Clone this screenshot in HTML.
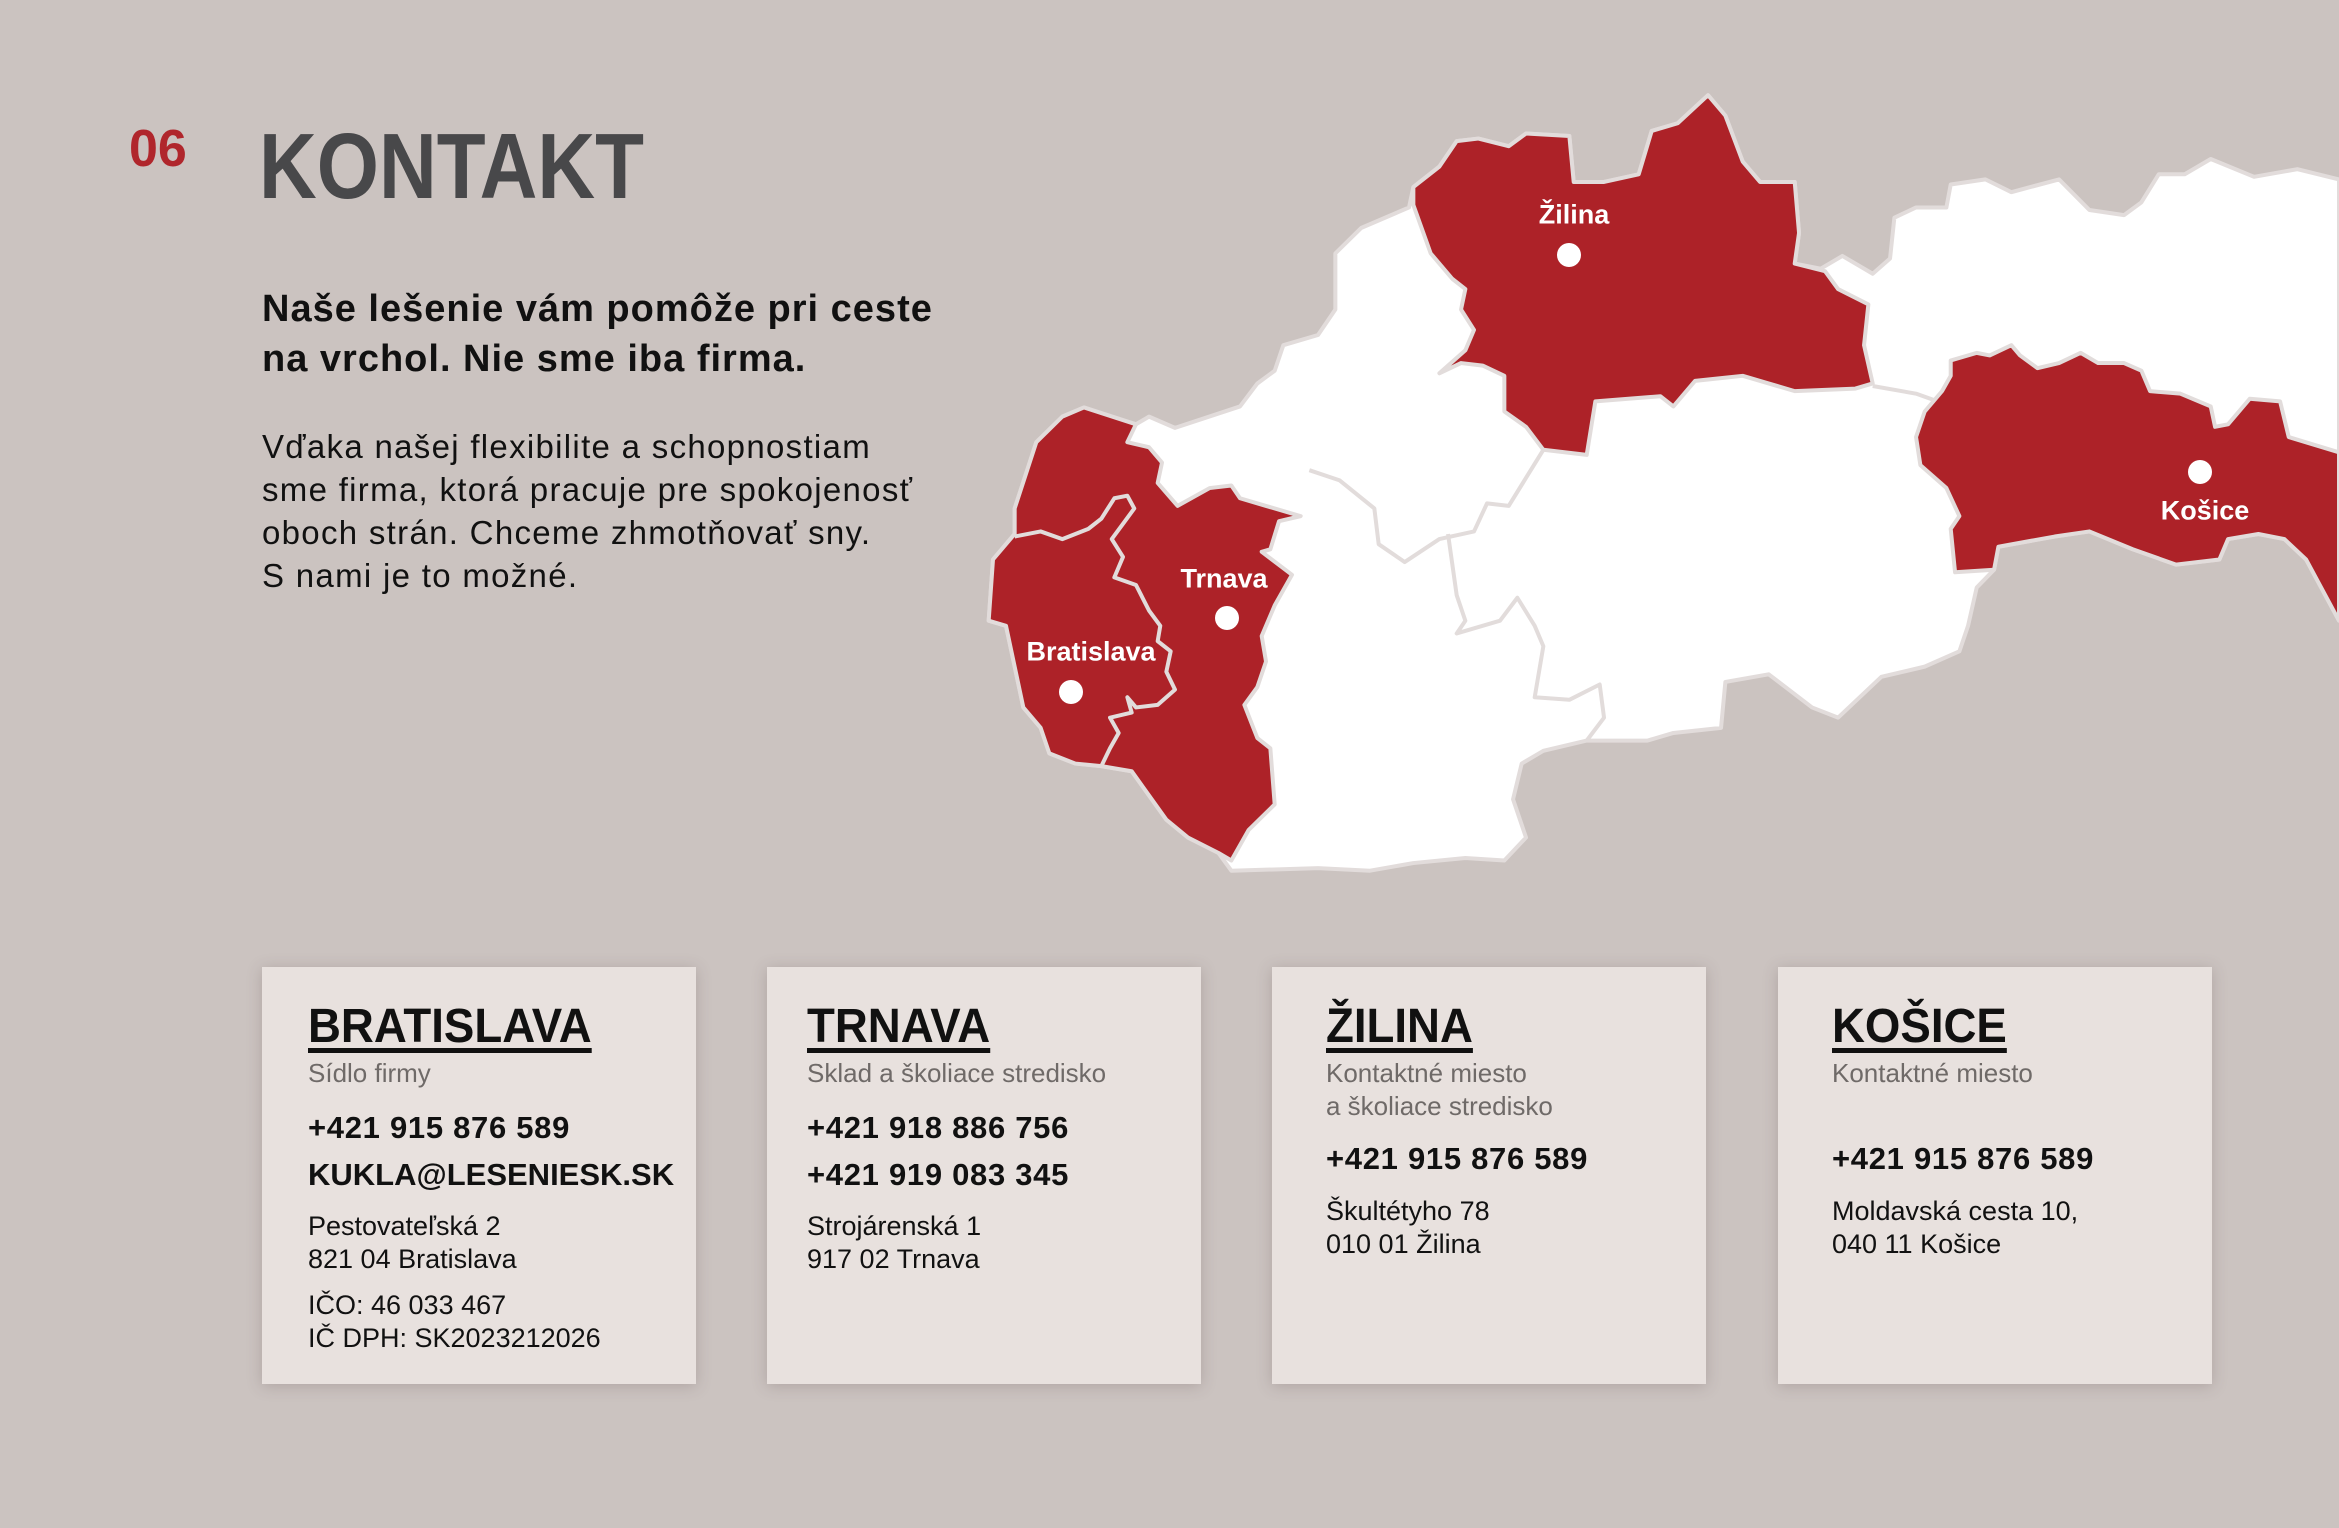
<!DOCTYPE html>
<html><head><meta charset="utf-8"><style>
body{margin:0;width:2339px;height:1528px;background:#cbc3c0;position:relative;overflow:hidden;font-family:"Liberation Sans",sans-serif;}
.a{position:absolute;white-space:nowrap;}
.card{position:absolute;top:967px;width:434px;height:417px;background:#e8e1de;box-shadow:0 2px 14px rgba(90,70,70,.25);}
.card .a{line-height:1;}
.h{font-weight:bold;font-size:48px;color:#111;transform:scaleX(.95);transform-origin:left;text-decoration:underline;text-decoration-thickness:5px;text-underline-offset:6px;}
.s{font-size:26px;color:#6f6a68;}
.p{font-size:31px;font-weight:bold;color:#111;letter-spacing:.7px;}
.t{font-size:27px;color:#111;}
.lbl{position:absolute;color:#fff;font-weight:bold;font-size:27px;transform:translate(-50%,-50%);white-space:nowrap;}
.dot{position:absolute;width:24px;height:24px;border-radius:50%;background:#fff;transform:translate(-50%,-50%);}
</style></head><body>
<div class="a" style="left:129px;top:123px;font-size:52px;line-height:52px;font-weight:bold;color:#b0262c;">06</div>
<div class="a" style="left:259px;top:120px;font-size:93px;line-height:93px;font-weight:bold;color:#48484a;transform:scaleX(.86);transform-origin:left;">KONTAKT</div>
<div class="a" style="left:262px;top:284px;font-size:38px;line-height:50px;font-weight:bold;color:#111;letter-spacing:1px;">Naše lešenie vám pomôže pri ceste<br>na vrchol. Nie sme iba firma.</div>
<div class="a" style="left:262px;top:425px;font-size:33px;line-height:43px;color:#111;letter-spacing:1.3px;">Vďaka našej flexibilite a schopnostiam<br>sme firma, ktorá pracuje pre spokojenosť<br>oboch strán. Chceme zhmotňovať sny.<br>S nami je to možné.</div>

<svg style="position:absolute;left:980px;top:85px;" width="1359" height="800" viewBox="0 0 1568 1568" preserveAspectRatio="none">
<g stroke="#e2dcdb" stroke-width="4" vector-effect="non-scaling-stroke" stroke-linejoin="round">
<path fill="#fff" vector-effect="non-scaling-stroke" d="M10,1050 L15,930 40,880 40,830 65,700 95,650 120,632 150,650 180,665 195,650 225,672 300,630 320,585 340,560 350,510 390,490 410,440 410,330 440,280 495,240 500,200 530,160 550,110 575,105 610,120 630,95 680,100 685,190 720,190 760,175 775,90 805,75 840,20 860,60 880,150 900,190 940,190 945,290 940,350 970,360 995,335 1030,370 1050,340 1055,260 1080,240 1115,240 1120,195 1160,185 1190,210 1245,185 1280,245 1320,255 1340,230 1360,175 1390,175 1420,145 1470,180 1520,165 1568,185 1568,1050 1530,930 1505,890 1475,880 1440,890 1430,930 1380,940 1330,910 1280,875 1240,885 1175,905 1170,950 1150,985 1140,1060 1130,1110 1090,1140 1040,1160 990,1240 960,1220 910,1155 860,1170 855,1260 800,1270 770,1285 700,1285 650,1305 625,1330 615,1400 630,1475 605,1520 560,1515 500,1525 450,1540 390,1535 290,1540 275,1505 240,1475 215,1440 175,1345 140,1335 110,1330 80,1310 70,1260 50,1220 40,1140 30,1060Z"/>
<path fill="none" vector-effect="non-scaling-stroke" d="M380,755 L415,775 455,830 460,900 490,935 530,890 570,875 585,820 610,825 630,770 650,715 M540,880 L550,1000 560,1050 550,1075 600,1050 620,1005 640,1060 650,1100 640,1200 680,1205 715,1175 720,1240 700,1285 M1030,590 L1080,605 1105,620"/>
<path fill="#ad2228" vector-effect="non-scaling-stroke" d="M500,235 L500,200 530,160 550,110 575,105 610,120 630,95 680,100 685,190 720,190 760,175 775,90 805,75 840,20 860,60 880,150 900,190 940,190 945,290 940,350 975,365 990,400 1025,430 1020,510 1030,585 1010,595 940,600 880,570 825,580 800,630 785,610 710,620 700,725 650,715 630,670 605,640 605,570 580,550 555,545 530,565 560,520 570,480 555,440 560,400 545,380 520,330Z"/>
<path fill="#ad2228" vector-effect="non-scaling-stroke" d="M10,1050 L15,930 40,880 40,830 65,700 95,650 120,632 180,665 170,700 195,710 210,740 205,780 228,825 265,790 290,785 300,810 330,825 370,845 345,855 335,910 325,915 360,960 340,1020 325,1080 330,1130 320,1180 305,1215 320,1280 335,1300 340,1410 310,1460 290,1520 275,1505 240,1475 215,1440 175,1345 140,1335 110,1330 80,1310 70,1260 50,1220 40,1140 30,1060Z"/>
<path fill="none" vector-effect="non-scaling-stroke" d="M40,885 L70,875 95,890 125,870 140,850 155,810 170,805 178,830 165,860 152,890 165,925 155,965 180,980 195,1030 208,1060 205,1090 220,1110 215,1150 225,1185 205,1215 180,1220 170,1200 175,1230 150,1240 160,1270 150,1300 140,1335"/>
<path fill="#ad2228" vector-effect="non-scaling-stroke" d="M1120,540 L1150,525 1165,530 1190,510 1200,530 1220,555 1245,545 1270,525 1290,545 1320,545 1340,560 1350,600 1385,605 1420,630 1425,670 1440,665 1465,615 1500,620 1510,690 1568,720 1568,1050 1530,930 1505,890 1475,880 1440,890 1430,930 1380,940 1330,910 1280,875 1240,885 1175,905 1170,950 1125,955 1120,870 1130,845 1115,790 1085,745 1080,690 1090,640 1110,600 1120,570Z"/>
</g></svg>
<div class="lbl" style="left:1574px;top:215px;">Žilina</div><div class="dot" style="left:1569px;top:255px;"></div>
<div class="lbl" style="left:1224px;top:579px;">Trnava</div><div class="dot" style="left:1227px;top:618px;"></div>
<div class="lbl" style="left:1091px;top:652px;">Bratislava</div><div class="dot" style="left:1071px;top:692px;"></div>
<div class="lbl" style="left:2205px;top:511px;">Košice</div><div class="dot" style="left:2200px;top:472px;"></div>

<div class="card" style="left:262px;">
<div class="a h" style="left:46px;top:36px;">BRATISLAVA</div>
<div class="a s" style="left:46px;top:93px;">Sídlo firmy</div>
<div class="a p" style="left:46px;top:145px;">+421 915 876 589</div>
<div class="a p" style="left:46px;top:192px;letter-spacing:0;">KUKLA@LESENIESK.SK</div>
<div class="a t" style="left:46px;top:246px;">Pestovateľská 2</div>
<div class="a t" style="left:46px;top:279px;">821 04 Bratislava</div>
<div class="a t" style="left:46px;top:325px;">IČO: 46 033 467</div>
<div class="a t" style="left:46px;top:358px;">IČ DPH: SK2023212026</div>
</div>
<div class="card" style="left:767px;">
<div class="a h" style="left:40px;top:36px;">TRNAVA</div>
<div class="a s" style="left:40px;top:93px;">Sklad a školiace stredisko</div>
<div class="a p" style="left:40px;top:145px;">+421 918 886 756</div>
<div class="a p" style="left:40px;top:192px;">+421 919 083 345</div>
<div class="a t" style="left:40px;top:246px;">Strojárenská 1</div>
<div class="a t" style="left:40px;top:279px;">917 02 Trnava</div>
</div>
<div class="card" style="left:1272px;">
<div class="a h" style="left:54px;top:36px;">ŽILINA</div>
<div class="a s" style="left:54px;top:93px;">Kontaktné miesto</div>
<div class="a s" style="left:54px;top:126px;">a školiace stredisko</div>
<div class="a p" style="left:54px;top:176px;">+421 915 876 589</div>
<div class="a t" style="left:54px;top:231px;">Škultétyho 78</div>
<div class="a t" style="left:54px;top:264px;">010 01 Žilina</div>
</div>
<div class="card" style="left:1778px;">
<div class="a h" style="left:54px;top:36px;">KOŠICE</div>
<div class="a s" style="left:54px;top:93px;">Kontaktné miesto</div>
<div class="a p" style="left:54px;top:176px;">+421 915 876 589</div>
<div class="a t" style="left:54px;top:231px;">Moldavská cesta 10,</div>
<div class="a t" style="left:54px;top:264px;">040 11 Košice</div>
</div>
</body></html>
